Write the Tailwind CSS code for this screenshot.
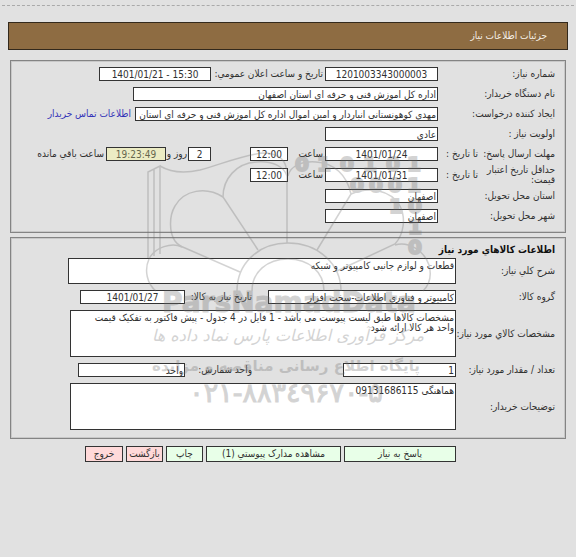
<!DOCTYPE html>
<html lang="fa" dir="rtl">
<head>
<meta charset="utf-8">
<title>جزئیات اطلاعات نیاز</title>
<script src="https://cdn.jsdelivr.net/npm/@tailwindcss/browser@4"></script>
</head>
<body class="relative bg-[#e1e1e1] font-['DejaVu_Sans_Condensed','DejaVu_Sans',sans-serif] text-[10px] leading-[10px] text-[#303030]">
<div class="mx-0.5 h-1.5 border-b border-dashed border-[#aaaaaa]"></div>
<header class="mx-2 mt-4 flex h-7 items-center border border-[#33291c] bg-[#8e6c42] px-5">
  <h1 class="text-[#f5efe6]">جزئیات اطلاعات نیاز</h1>
</header>

<form>
<section class="mx-2.5 mt-2.5 border border-[#848484] pt-[3px] pr-2.5 pb-1.5 shadow-[inset_0_0_0_1px_#c8c8c8]">
  <div class="flex h-5 items-center">
    <label for="num" class="w-[117px]">شماره نیاز:</label>
    <input id="num" dir="ltr" value="1201003343000003" class="h-3.5 w-[113px] border border-[#333333] bg-white text-center">
    <label for="pub" class="w-[114px] px-0.5 whitespace-nowrap">تاریخ و ساعت اعلان عمومي:</label>
    <input id="pub" dir="ltr" value="1401/01/21 - 15:30" class="h-3.5 w-28 border border-[#333333] bg-white text-center">
  </div>
  <div class="flex h-5 items-center">
    <label for="org" class="w-[117px]">نام دستگاه خریدار:</label>
    <input id="org" value="اداره کل اموزش فنی و حرفه ای استان اصفهان" class="h-3.5 w-[305px] border border-[#333333] bg-white px-px">
  </div>
  <div class="flex h-5 items-center">
    <label for="creator" class="w-[117px]">ایجاد کننده درخواست:</label>
    <input id="creator" value="مهدی کوهونستانی انباردار و امین اموال اداره کل اموزش فنی و حرفه ای استان اصفهان" class="h-3.5 w-[303px] border border-[#333333] bg-white px-px">
    <a href="#" class="px-1 whitespace-nowrap text-[#3434b8]">اطلاعات تماس خریدار</a>
  </div>
  <div class="flex h-5 items-center">
    <label for="prio" class="w-[117px]">اولویت نیاز :</label>
    <input id="prio" value="عادي" class="h-3.5 w-[113px] border border-[#333333] bg-white px-px">
  </div>
  <div class="flex h-5 items-center">
    <span class="w-[77px] whitespace-nowrap">مهلت ارسال پاسخ:</span>
    <label for="d1" class="w-10 whitespace-nowrap">تا تاریخ :</label>
    <input id="d1" dir="ltr" value="1401/01/24" class="h-3.5 w-[113px] border border-[#333333] bg-white text-center">
    <label for="t1" class="w-[37px] px-0.5">ساعت</label>
    <input id="t1" dir="ltr" value="12:00" class="h-3.5 w-[38px] border border-[#333333] bg-white text-center">
    <input id="days" dir="ltr" value="2" class="mr-[39px] h-3.5 w-[23px] border border-[#333333] bg-white text-center">
    <label for="days" class="w-[22px] px-px whitespace-nowrap">روز و</label>
    <input id="left" dir="ltr" value="19:23:49" class="h-3.5 w-[60px] border border-[#333333] bg-[#ececc4] text-center text-[#66664c]">
    <label for="left" class="px-0.5 whitespace-nowrap">ساعت باقي مانده</label>
  </div>
  <div class="flex h-[22px] items-center">
    <span class="w-[77px]">حداقل تاریخ اعتبار قیمت:</span>
    <label for="d2" class="w-10 whitespace-nowrap">تا تاریخ :</label>
    <input id="d2" dir="ltr" value="1401/01/31" class="h-3.5 w-[113px] border border-[#333333] bg-white text-center">
    <label for="t2" class="w-[37px] px-0.5">ساعت</label>
    <input id="t2" dir="ltr" value="12:00" class="h-3.5 w-[38px] border border-[#333333] bg-white text-center">
  </div>
  <div class="flex h-5 items-center">
    <label for="prov" class="w-[117px]">استان محل تحویل:</label>
    <input id="prov" value="اصفهان" class="h-3.5 w-[113px] border border-[#333333] bg-white px-px">
  </div>
  <div class="flex h-5 items-center">
    <label for="city" class="w-[117px]">شهر محل تحویل:</label>
    <input id="city" value="اصفهان" class="h-3.5 w-[113px] border border-[#333333] bg-white px-px">
  </div>
</section>

<section class="mx-2.5 mt-1 border border-[#848484] pt-1 pr-2.5 pb-2 shadow-[inset_0_0_0_1px_#c8c8c8]">
  <h2 class="h-4 font-bold leading-4 text-[#111111]">اطلاعات کالاهاي مورد نیاز</h2>
  <div class="flex flex-col gap-1.5">
  <div class="flex items-center">
    <label for="desc" class="w-[99px]">شرح کلي نیاز:</label>
    <textarea id="desc" class="ml-[57px] h-[26px] flex-1 resize-none border border-[#333333] bg-white px-px pt-0.5">قطعات و لوازم جانبی کامپیوتر و شبکه</textarea>
  </div>
  <div class="flex items-center">
    <label for="grp" class="w-[99px]">گروه کالا:</label>
    <input id="grp" value="کامپیوتر و فناوری اطلاعات-سخت افزار" class="h-3.5 w-[188px] border border-[#333333] bg-white px-px">
    <label for="need" class="mr-4 w-[67px] whitespace-nowrap">تاریخ نیاز به کالا:</label>
    <input id="need" dir="ltr" value="1401/01/27" class="h-3.5 w-[105px] border border-[#333333] bg-white text-center">
  </div>
  <div class="flex items-center">
    <label for="spec" class="w-[99px] whitespace-nowrap">مشخصات کالاي مورد نیاز:</label>
    <textarea id="spec" class="ml-[59px] h-[47px] flex-1 resize-none border border-[#333333] bg-white pt-0.5 pr-px pl-4">مشخصات کالاها طبق لیست پیوست می باشد - 1 فایل در 4 جدول - پیش فاکتور به تفکیک قیمت واحد هر کالا ارائه شود</textarea>
  </div>
  <div class="flex items-center">
    <label for="qty" class="w-[99px] whitespace-nowrap">تعداد / مقدار مورد نیاز:</label>
    <input id="qty" value="1" class="h-3.5 w-[113px] border border-[#333333] bg-white px-px">
    <label for="unit" class="mr-[91px] w-[67px]">واحد شمارش:</label>
    <input id="unit" value="واحد" class="h-3.5 w-[107px] border border-[#333333] bg-white px-px">
  </div>
  <div class="flex items-center">
    <label for="note" class="w-[99px]">توضیحات خریدار:</label>
    <textarea id="note" class="ml-[59px] h-[47px] flex-1 resize-none border border-[#333333] bg-white px-px pt-0.5">هماهنگی 09131686115</textarea>
  </div>
  </div>
</section>

<div class="mt-[7px] mr-[120px] flex gap-[3px]">
  <button type="button" class="h-4 w-28 border border-[#333333] bg-[#e8ffe8]">پاسخ به نیاز</button>
  <button type="button" class="h-4 w-[135px] border border-[#333333] bg-[#e8ffe8]">مشاهده مدارک پیوستي (1)</button>
  <button type="button" class="h-4 w-[37px] border border-[#333333] bg-[#e8ffe8]">چاپ</button>
  <button type="button" class="h-4 w-[37px] border border-[#333333] bg-[#ffd9d9]">بازگشت</button>
  <button type="button" class="h-4 w-[38px] border border-[#333333] bg-[#ffd9d9]">خروج</button>
</div>
</form>

<!-- Watermark over the form -->
<svg class="pointer-events-none absolute top-0 right-0 h-[557px] w-[576px] opacity-30" viewBox="0 0 576 557" fill="none" aria-hidden="true">
  <g stroke="#707070" stroke-width="1.5">
    <path d="M148 258V172L154 169V256M154 169L160 166V254"/>
    <path d="M160 166C170 172 182 174 200 170C222 164 240 156 262 153C276 153 287 158 287 174V243"/>
    <path d="M287 176C284 166 272 161 257 162C236 163 223 179 223 197L258 250"/>
    <path d="M223 197C206 186 184 190 175 206C169 216 169 232 175 241C178 245 182 247 185 248L240 272"/>
    <path d="M182 247C172 242 155 247 149 259C144 270 147 284 156 291"/>
    <path d="M288 176C290 166 302 161 316 162C334 163 347 175 351 194L317 250"/>
    <path d="M351 194C369 186 391 190 400 206C406 218 404 234 395 244L337 271"/>
    <path d="M395 245C408 241 424 250 429 265C432 276 429 285 423 291"/>
    <path d="M237 291C237 264 258 243 288 243S341 264 341 291M252 291C252 272 267 259 288 259S324 272 324 291"/>
  </g>
  <g fill="#707070" stroke="#707070" stroke-width="2" font-family="DejaVu Sans" font-weight="bold" font-size="20" text-anchor="middle" direction="ltr">
    <text x="302" y="171">0</text><text x="324" y="171">1</text><text x="347" y="171">0</text><text x="370" y="171">1</text><text x="393" y="171">0</text><text x="414" y="171">1</text>
    <text x="357" y="192">0</text><text x="376" y="192">0</text><text x="395" y="192">0</text><text x="414" y="192">1</text>
    <text x="396" y="213">1</text><text x="415" y="213">0</text><text x="415" y="234">1</text><text x="415" y="254">0</text>
    <text x="289" y="312" font-size="28" stroke-width="1">ParsNamadData</text>
  </g>
  <g fill="#707070" font-family="DejaVu Sans" text-anchor="middle" direction="rtl">
    <text x="288" y="341" font-size="16" font-style="italic">مرکز فرآوری اطلاعات پارس نماد داده ها</text>
    <text x="286" y="371" font-size="15" font-weight="bold">پایگاه اطلاع رسانی مناقصه و مزایده</text>
    <text x="286" y="402" font-size="27" stroke="#707070" direction="ltr" style="unicode-bidi:bidi-override">۰۲۱-۸۸۳٤۹۶۷۰-۵</text>
  </g>
</svg>
</body>
</html>
